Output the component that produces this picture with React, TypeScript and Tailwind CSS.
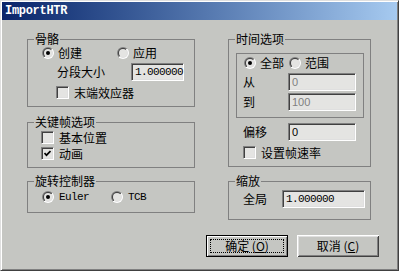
import type { ReactNode } from 'react'

// classic sunken radio button
function Radio({ checked = false }: { checked?: boolean }) {
  return (
    <svg width="12" height="12" viewBox="0 0 12 12" className="shrink-0">
      <defs>
        <linearGradient id="radio-outer" x1="0" y1="0" x2="1" y2="1">
          <stop offset="0.5" stopColor="#808080" />
          <stop offset="0.5" stopColor="#ffffff" />
        </linearGradient>
        <linearGradient id="radio-inner" x1="0" y1="0" x2="1" y2="1">
          <stop offset="0.5" stopColor="#404040" />
          <stop offset="0.5" stopColor="#dfdfdf" />
        </linearGradient>
      </defs>
      <circle cx="6" cy="6" r="6" fill="url(#radio-outer)" />
      <circle cx="6" cy="6" r="5" fill="url(#radio-inner)" />
      <circle cx="6" cy="6" r="4" fill="#e4e4e2" />
      {checked && <circle cx="6" cy="6" r="2" fill="#000000" />}
    </svg>
  )
}

function Checkbox({ checked = false }: { checked?: boolean }) {
  return (
    <span className="w-[13px] h-[13px] shrink-0 flex items-center justify-center border border-[#808080] border-r-white border-b-white bg-[#e4e4e2] shadow-[inset_1px_1px_0_#404040,inset_-1px_-1px_0_#dfdfdf]">
      {checked && (
        <svg width="7" height="7" viewBox="0 0 7 7">
          <polyline points="0.5,3 2.5,5.2 6.5,1" fill="none" stroke="#000" strokeWidth="1.7" />
        </svg>
      )}
    </span>
  )
}

function Field({
  value,
  className,
  disabled = false,
  mono = false,
}: {
  value: string
  className: string
  disabled?: boolean
  mono?: boolean
}) {
  return (
    <div
      className={`h-[18px] flex items-center pl-[3px] border border-[#808080] border-r-white border-b-white bg-[#e4e4e2] shadow-[inset_1px_1px_0_#404040,inset_-1px_-1px_0_#dfdfdf] ${className}`}
    >
      <span
        className={
          mono
            ? "font-['Liberation_Mono',monospace] text-[11px] tracking-[-0.6px] text-black"
            : disabled
              ? "font-['Liberation_Sans',sans-serif] text-[11px] text-[#808080]"
              : "font-['Liberation_Sans',sans-serif] text-[11px] text-black"
        }
      >
        {value}
      </span>
    </div>
  )
}

function Group({ title, className, children }: { title: string; className: string; children: ReactNode }) {
  return (
    <fieldset className={`border border-[#808080] ${className}`}>
      <legend className="ml-[6px] px-[1px] leading-[12px]">{title}</legend>
      {children}
    </fieldset>
  )
}

export default function App() {
  return (
    <div className="w-[399px] h-[271px] flex flex-col bg-[#c5c6c2] border border-t-[#dfdfdf] border-l-[#dfdfdf] border-r-[#404040] border-b-[#404040] shadow-[inset_1px_1px_0_#ffffff,inset_-1px_-1px_0_#808080] p-[1px] text-[12px] leading-[12px] text-black font-['Noto_Sans_CJK_SC',sans-serif] overflow-hidden">
      {/* Title bar */}
      <div className="h-[18px] flex items-center pl-[3px] bg-linear-to-r from-[#0a246a] to-[#a6caf0]">
        <span className="font-['Liberation_Mono',monospace] font-bold text-[12px] tracking-[-0.3px] text-white">
          ImportHTR
        </span>
      </div>

      <div className="flex pt-[13px] pl-[25px]">
        {/* Left column */}
        <div className="flex flex-col w-[168px]">
          <Group title="骨骼" className="pb-[7px]">
            <div className="flex items-center mt-[2px] pl-[14px] h-[12px]">
              <div className="flex items-center gap-[4px] w-[75px]">
                <Radio checked />
                <span>创建</span>
              </div>
              <div className="flex items-center gap-[4px]">
                <Radio />
                <span>应用</span>
              </div>
            </div>
            <div className="flex items-center mt-[4px] pl-[29px] h-[18px]">
              <span className="w-[74px]">分段大小</span>
              <Field value="1.000000" className="w-[53px]" mono />
            </div>
            <div className="flex items-center gap-[5px] mt-[5px] pl-[28px] h-[13px]">
              <Checkbox />
              <span>末端效应器</span>
            </div>
          </Group>

          <Group title="关键帧选项" className="mt-[9px] pb-[7px]">
            <div className="flex items-center gap-[5px] mt-[3px] pl-[13px] h-[13px]">
              <Checkbox />
              <span>基本位置</span>
            </div>
            <div className="flex items-center gap-[5px] mt-[3px] pl-[13px] h-[13px]">
              <Checkbox checked />
              <span>动画</span>
            </div>
          </Group>

          <Group title="旋转控制器" className="mt-[7px] pb-[9px]">
            <div className="flex items-center mt-[4px] pl-[14px] h-[12px]">
              <div className="flex items-center gap-[5px] w-[69px]">
                <Radio checked />
                <span className="font-['Liberation_Mono',monospace] text-[11px] tracking-[-0.6px]">Euler</span>
              </div>
              <div className="flex items-center gap-[5px]">
                <Radio />
                <span className="font-['Liberation_Mono',monospace] text-[11px] tracking-[-0.6px]">TCB</span>
              </div>
            </div>
          </Group>
        </div>

        {/* Right column */}
        <div className="flex flex-col ml-[11px] w-[173px]">
          <Group title="时间选项" className="ml-[22px] w-[143px] pb-[7px]">
            <div className="ml-[7px] mt-[8px] w-[128px] h-[65px] border border-[#808080]">
              <div className="flex items-center mt-[3px] pl-[7px] h-[12px]">
                <div className="flex items-center gap-[4px] w-[45px]">
                  <Radio checked />
                  <span>全部</span>
                </div>
                <div className="flex items-center gap-[4px]">
                  <Radio />
                  <span>范围</span>
                </div>
              </div>
              <div className="flex items-center mt-[4px] pl-[6px] h-[18px]">
                <span className="w-[45px]">从</span>
                <Field value="0" className="w-[68px]" disabled />
              </div>
              <div className="flex items-center mt-[2px] pl-[6px] h-[18px]">
                <span className="w-[45px]">到</span>
                <Field value="100" className="w-[68px]" disabled />
              </div>
            </div>
            <div className="flex items-center mt-[5px] pl-[14px] h-[18px]">
              <span className="w-[45px]">偏移</span>
              <Field value="0" className="w-[68px]" />
            </div>
            <div className="flex items-center gap-[5px] mt-[5px] pl-[14px] h-[13px]">
              <Checkbox />
              <span>设置帧速率</span>
            </div>
          </Group>

          <Group title="缩放" className="ml-[22px] w-[143px] mt-[8px] pb-[11px]">
            <div className="flex items-center mt-[3px] pl-[14px] h-[18px]">
              <span className="w-[39px]">全局</span>
              <Field value="1.000000" className="w-[83px]" mono />
            </div>
          </Group>

          {/* Buttons */}
          <div className="flex gap-[9px] mt-[15px]">
            <button className="relative w-[82px] h-[22px] flex items-center justify-center border border-black bg-[#c5c6c2] shadow-[inset_1px_1px_0_#ffffff,inset_-1px_-1px_0_#808080]">
              <span className="absolute inset-[3px] border border-dotted border-black" />
              <span>
                确定 (<span className="underline">O</span>)
              </span>
            </button>
            <button className="w-[82px] h-[22px] flex items-center justify-center bg-[#c5c6c2] shadow-[inset_1px_1px_0_#ffffff,inset_-1px_-1px_0_#404040,inset_2px_2px_0_#dfdfdf,inset_-2px_-2px_0_#808080]">
              <span>
                取消 (<span className="underline">C</span>)
              </span>
            </button>
          </div>
        </div>
      </div>
    </div>
  )
}
